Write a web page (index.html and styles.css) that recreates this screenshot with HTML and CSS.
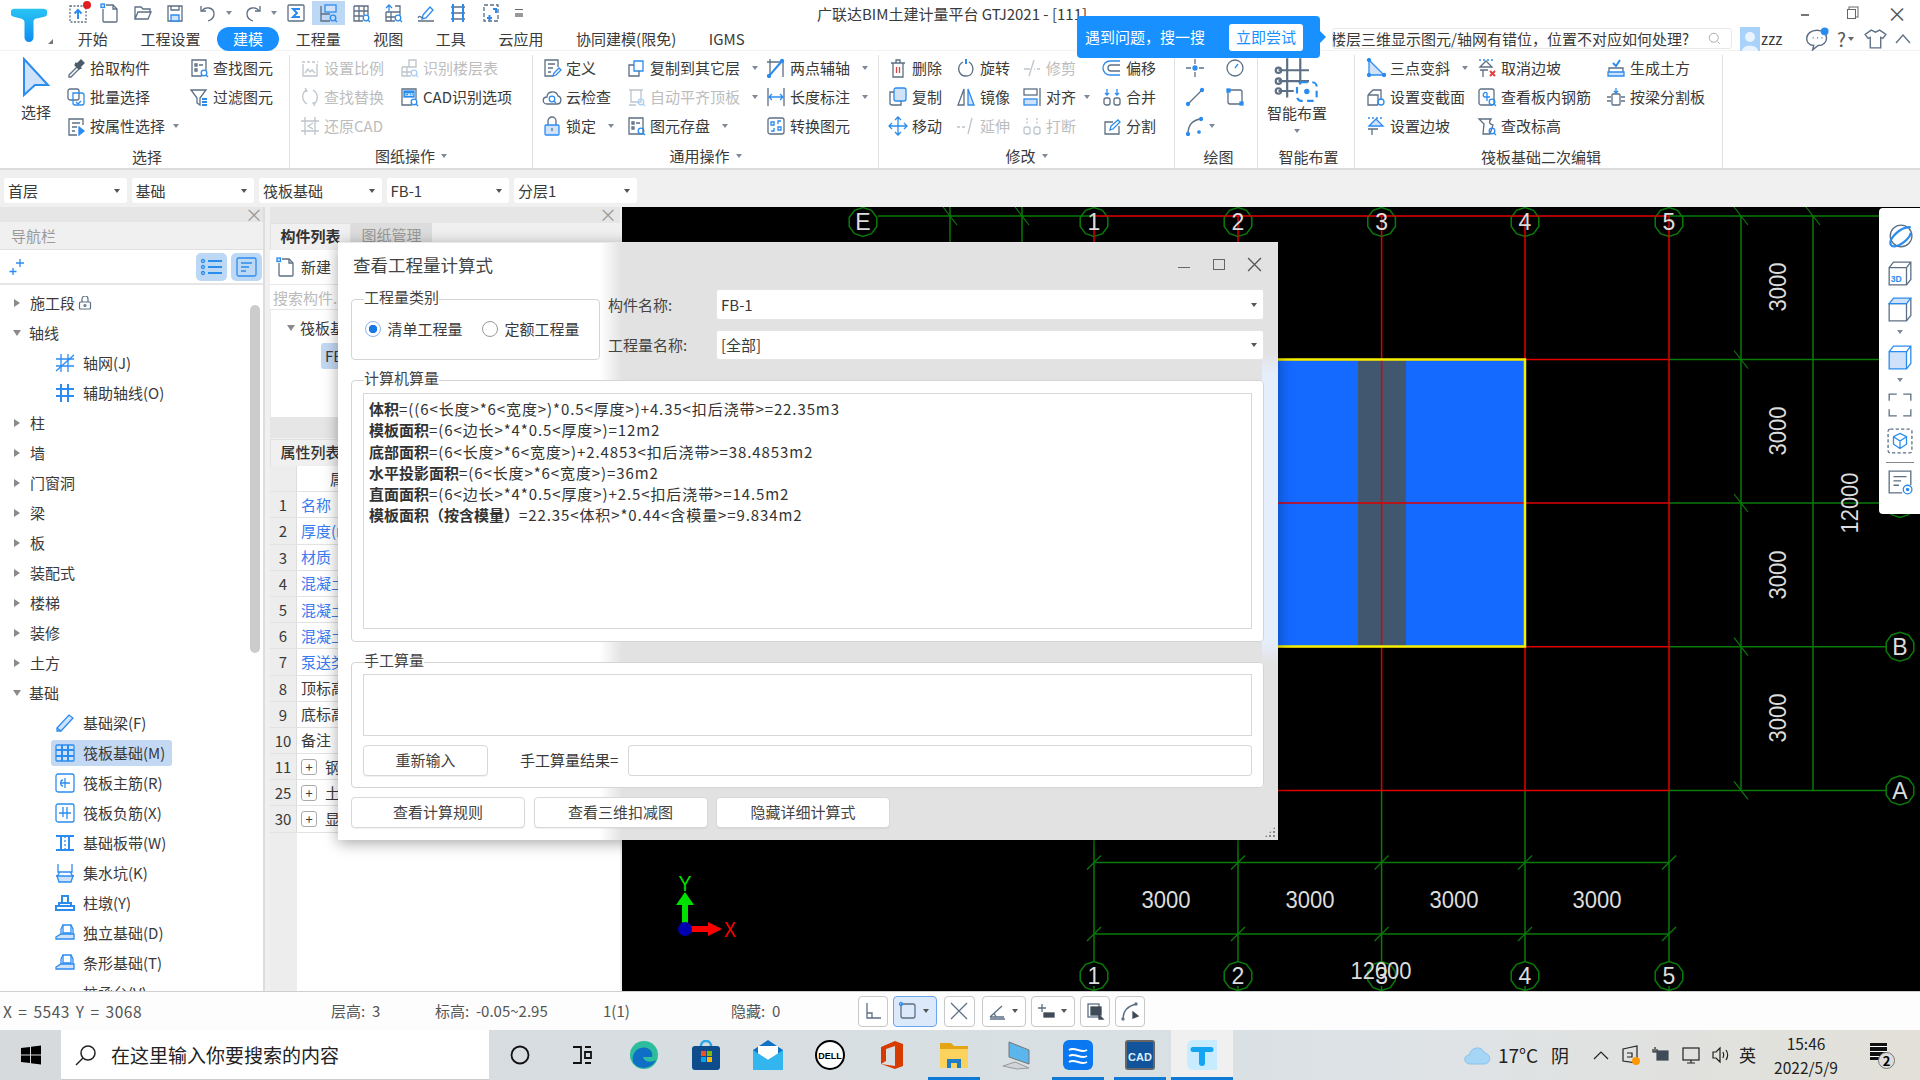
FILE: index.html
```html
<!DOCTYPE html>
<html lang="zh-CN">
<head>
<meta charset="utf-8">
<title>广联达BIM土建计量平台 GTJ2021</title>
<link rel="stylesheet" href="styles.css">
</head>
<body>
<svg class="defs" aria-hidden="true">
<defs>
<linearGradient id="tgrad" x1="0" y1="0" x2="0" y2="1"><stop offset="0" stop-color="#28c4f4"/><stop offset="1" stop-color="#0f8cf0"/></linearGradient>
<g id="mag"><circle class="a" cx="15" cy="15" r="2.8"/><path class="a" d="M17 17l2 2"/></g>
<symbol id="sync" viewBox="0 0 20 20"><path stroke-dasharray="2 1.5" d="M2 3h16v16H2z"/><path class="a w2" d="M10 16V8M6.5 10.5L10 7l3.500 3.500"/></symbol>
<symbol id="file" viewBox="0 0 20 20"><path d="M6 2h7l4 4v12a1 1 0 0 1-1 1H4a1 1 0 0 1-1-1V6"/><path d="M13 2v4h4"/><rect class="l" x="1" y="1" width="3.500" height="3.500"/></symbol>
<symbol id="folder" viewBox="0 0 20 20"><path d="M2 16V4h6l2 2h7v3M2 16l3-7h13l-3 7z"/></symbol>
<symbol id="save" viewBox="0 0 20 20"><path d="M3 3h14v15H3z"/><path d="M6 3v4h8V3"/><path class="l" d="M6 12h8v6H6z"/></symbol>
<symbol id="undo" viewBox="0 0 20 20"><path d="M4 8c3-5 12-4 12 3 0 4-3 6-6 7"/><path d="M3 3v5h5"/></symbol>
<symbol id="redo" viewBox="0 0 20 20"><path d="M16 8C13 3 4 4 4 11c0 4 3 6 6 7"/><path d="M17 3v5h-5"/></symbol>
<symbol id="sigma" viewBox="0 0 20 20"><rect x="2" y="2" width="16" height="16" rx="1"/><path class="a w2" d="M14 6H7l4 4-4 4h7"/></symbol>
<symbol id="gq" viewBox="0 0 20 20"><path d="M3 3v15h9M3 11h9"/><rect class="l" x="7" y="2" width="11" height="7"/><use href="#mag"/></symbol>
<symbol id="gq2" viewBox="0 0 20 20"><path d="M3 3h14v9M3 3v15h9M3 8h14M3 13h9M8 3v15M13 3v9"/><use href="#mag"/></symbol>
<symbol id="gq3" viewBox="0 0 20 20"><path d="M12 3h5v9M3 9h14M3 9v9h9M8 9v9M3 14h9"/><path class="a" d="M6 2v6M3 5l3-3 3 3"/><use href="#mag"/></symbol>
<symbol id="pen" viewBox="0 0 20 20"><path class="a" d="M7 12l7-8 3 3-7 8-4 1z"/><path d="M2 15c2-4 3 1 5-1M2 18h16"/></symbol>
<symbol id="bars" viewBox="0 0 20 20"><path d="M3 4h14M3 10h14M3 16h14"/><path class="a w2" d="M5 1v18M15 1v18"/></symbol>
<symbol id="plusf" viewBox="0 0 20 20"><path stroke-dasharray="4 2" d="M3 2h14v16H3z"/><path class="a w2" d="M6 15h5M8.500 12v6M12 6h3v4"/></symbol>
<symbol id="pick" viewBox="0 0 20 20"><path d="M3 17l9-9 2 2-9 9H3z"/><path class="k" d="M11 6l4-4 3 3-4 4 1 1-2 1-4-4 1-2z"/></symbol>
<symbol id="batch" viewBox="0 0 20 20"><rect x="2" y="2" width="11" height="11" rx="2"/><path class="a" d="M7 6h9a2 2 0 0 1 2 2v8a2 2 0 0 1-2 2H9a2 2 0 0 1-2-2z"/><path class="a" d="M10 15l2 2 3-3"/></symbol>
<symbol id="attr" viewBox="0 0 20 20"><path d="M17 9V3H3v16h8"/><path d="M6 7h8M6 11h5M6 15h3"/><path class="af" d="M13 11l5 4-5 4z"/></symbol>
<symbol id="find" viewBox="0 0 20 20"><path d="M13 18H3V2h14v10"/><path d="M6 6h2v2H6zM10 7h4M6 11h2v2H6z"/><use href="#mag"/></symbol>
<symbol id="filter" viewBox="0 0 20 20"><path d="M2 3h15l-6 8v7l-3-2v-5z"/><path class="a w2" d="M13 12h5M13 15h5M13 18h5"/></symbol>
<symbol id="scale" viewBox="0 0 20 20"><path stroke-dasharray="3 2" d="M2 4h16"/><path d="M3 6v12h14V6M5 15l3-4 2 3 2-2 3 3"/></symbol>
<symbol id="floors" viewBox="0 0 20 20"><path d="M10 2h7v7h-7zM3 9h14M3 9v9h9M8 9v9M3 14h9M10 2v7"/><use href="#mag"/></symbol>
<symbol id="replace" viewBox="0 0 20 20"><path d="M6 3C1 7 2 14 7 17M14 17c5-4 4-11-1-14M5 1l2 3-3 1M15 19l-2-3 3-1"/></symbol>
<symbol id="cadopt" viewBox="0 0 20 20"><path d="M13 18H3V2h14v10"/><rect class="af" x="5" y="4" width="10" height="6"/><text class="tiny" x="10" y="9" text-anchor="middle">CAD</text><use href="#mag"/></symbol>
<symbol id="restore" viewBox="0 0 20 20"><path d="M5 1v18M15 1v18M1 5h18M1 15h18M13 7l-5 3 5 3"/></symbol>
<symbol id="define" viewBox="0 0 20 20"><path d="M16 9V2H3v16h8"/><path d="M6 6h7M6 10h5M6 14h3"/><path class="a" d="M11 18l1-3 5-5 2 2-5 5z"/></symbol>
<symbol id="cloud" viewBox="0 0 20 20"><path d="M5 17c-5 0-5-7 0-7 0-6 9-7 11-1 4 1 4 8-1 8z"/><use href="#mag" transform="translate(-5 -3)"/></symbol>
<symbol id="lock" viewBox="0 0 20 20"><path d="M6 9V5a4 4 0 0 1 8 0v4"/><rect class="l" x="3" y="9" width="14" height="10" rx="1"/><path d="M10 12v3"/></symbol>
<symbol id="copyl" viewBox="0 0 20 20"><path class="a" d="M8 3h9v10H8z"/><path d="M8 7H3v11h10v-5"/></symbol>
<symbol id="auto" viewBox="0 0 20 20"><path d="M3 3h14M5 3v12h10V3M3 18h7"/><use href="#mag"/></symbol>
<symbol id="store" viewBox="0 0 20 20"><path d="M3 2h14v16H3zM6 6h2v2H6zM10 7h4M6 11h2v2H6z"/><use href="#mag"/></symbol>
<symbol id="twop" viewBox="0 0 20 20"><path d="M4 1v18M1 4h16v15"/><path class="a w2" d="M3 18L16 3"/><circle class="af" cx="3" cy="18" r="1.500"/><circle class="af" cx="16" cy="3" r="1.500"/></symbol>
<symbol id="dim" viewBox="0 0 20 20"><path d="M2 1v18M18 1v18"/><path class="a" d="M3 10h14M6 7l-3 3 3 3M14 7l3 3-3 3"/></symbol>
<symbol id="conv" viewBox="0 0 20 20"><rect x="2" y="2" width="16" height="16" rx="2"/><path class="a" d="M5 6h3v3H5zM12 11h3v3h-3zM12 8V5h3M8 12v3H5"/></symbol>
<symbol id="del" viewBox="0 0 20 20"><path d="M3 5h14M8 5V2h4v3M5 5v14h10V5"/><path class="r" d="M8.500 9v6M11.500 9v6"/></symbol>
<symbol id="rot" viewBox="0 0 20 20"><path d="M7 4C0 8 2 18 10 18s9-10 3-14"/><path class="a w2" d="M10 1v5"/></symbol>
<symbol id="trim" viewBox="0 0 20 20"><path d="M2 11h6M12 2L7 18M12 11h1M15 11h3"/></symbol>
<symbol id="offset" viewBox="0 0 20 20"><path class="a" d="M18 3H8a7 7 0 0 0 0 14h10"/><path d="M18 7H9a3 3 0 0 0 0 6h9"/></symbol>
<symbol id="copy" viewBox="0 0 20 20"><rect class="l" x="6" y="1" width="12" height="13" rx="2"/><path d="M6 5H2v11a2 2 0 0 0 2 2h9v-4"/></symbol>
<symbol id="mirror" viewBox="0 0 20 20"><path d="M8 2L2 18h6z"/><path class="l" d="M12 2l6 16h-6z"/></symbol>
<symbol id="align" viewBox="0 0 20 20"><path d="M18 1v18"/><rect x="2" y="2" width="13" height="6"/><rect class="l" x="2" y="12" width="13" height="6"/></symbol>
<symbol id="merge" viewBox="0 0 20 20"><rect x="2" y="11" width="6" height="7" rx="2"/><rect x="12" y="11" width="6" height="7" rx="2"/><path class="a" d="M5 2v6M3 6l2 2 2-2M15 2v6M13 6l2 2 2-2"/></symbol>
<symbol id="move" viewBox="0 0 20 20"><path class="a" d="M10 1v18M1 10h18M7 4l3-3 3 3M7 16l3 3 3-3M4 7l-3 3 3 3M16 7l3 3-3 3"/></symbol>
<symbol id="ext" viewBox="0 0 20 20"><path stroke-dasharray="3 2" d="M1 11h10"/><path d="M16 2l-4 16"/></symbol>
<symbol id="brk" viewBox="0 0 20 20"><rect x="2" y="11" width="6" height="7" rx="2"/><rect x="12" y="11" width="6" height="7" rx="2"/><path stroke-dasharray="2 1.500" d="M5 2v7M15 2v7"/></symbol>
<symbol id="split" viewBox="0 0 20 20"><path d="M17 10v8H3V6h8"/><path class="a" d="M8 14l1-4 7-6 2 2-7 7z"/></symbol>
<symbol id="pt" viewBox="0 0 20 20"><path d="M1 10h5M14 10h5M10 1v5M10 14v5"/><circle class="af" cx="10" cy="10" r="2"/></symbol>
<symbol id="clock" viewBox="0 0 20 20"><circle cx="10" cy="10" r="8"/><path class="a" d="M10 10l3-4"/></symbol>
<symbol id="line" viewBox="0 0 20 20"><path d="M3 17L17 3"/><circle class="af" cx="3" cy="17" r="1.500"/><circle class="af" cx="17" cy="3" r="1.500"/></symbol>
<symbol id="rect" viewBox="0 0 20 20"><rect x="3" y="3" width="14" height="14" rx="2"/><rect class="af" x="2" y="2" width="3" height="3"/><rect class="af" x="15" y="15" width="3" height="3"/></symbol>
<symbol id="arc" viewBox="0 0 20 20"><path d="M3 18C3 9 8 4 16 3"/><circle class="af" cx="3" cy="18" r="1.500"/><circle class="af" cx="16" cy="3" r="1.500"/><circle class="af" cx="14" cy="16" r="1.200"/></symbol>
<symbol id="three" viewBox="0 0 20 20"><path class="l" d="M3 2l15 15H3z"/><circle class="af" cx="3" cy="2" r="1.500"/><circle class="af" cx="3" cy="17" r="1.500"/><circle class="af" cx="18" cy="17" r="1.500"/></symbol>
<symbol id="sect" viewBox="0 0 20 20"><path d="M2 8l5-5h8v10M2 8v10h10M2 8h10v10"/><circle class="a" cx="15" cy="15" r="3"/></symbol>
<symbol id="slope" viewBox="0 0 20 20"><path class="l" d="M3 10l7-7 7 7z"/><path class="a" stroke-dasharray="2 2" d="M2 2h16"/><path d="M2 13h10M6 13v6"/></symbol>
<symbol id="cancel" viewBox="0 0 20 20"><path d="M3 9l6-6 6 6zM3 12h8M6 12v7"/><path class="a" stroke-dasharray="2 2" d="M2 2h16"/><path class="r w2" d="M13 13l5 5M18 13l-5 5"/></symbol>
<symbol id="rebar" viewBox="0 0 20 20"><rect x="2" y="2" width="15" height="16" rx="2"/><path class="a" d="M7 10h6M7 10c-2-3 1-6 3-4v8"/><use href="#mag"/></symbol>
<symbol id="elev" viewBox="0 0 20 20"><path d="M2 3h12c-3 4-1 5 2 6l-3 9H6L7 8z"/><use href="#mag"/></symbol>
<symbol id="earth" viewBox="0 0 20 20"><path d="M3 10h14v7H3z"/><path class="l" d="M2 14h16v4H2z"/><path class="a w2" d="M7 5l3 3 4-6"/></symbol>
<symbol id="cutb" viewBox="0 0 20 20"><rect x="6" y="7" width="8" height="11" rx="1"/><path d="M1 10h4M1 14h4M15 10h4M15 14h4"/><path class="a" d="M10 1v5M8 4l2 2 2-2"/></symbol>
<symbol id="spark" viewBox="0 0 20 20"><path class="a" d="M13 2v8M9 6h8M6 11v7M2.500 14.500h7"/></symbol>
<symbol id="listi" viewBox="0 0 24 20"><circle class="a" cx="3" cy="4" r="1.500"/><circle class="a" cx="3" cy="10" r="1.500"/><circle class="a" cx="3" cy="16" r="1.500"/><path class="a w2" d="M8 4h14M8 10h14M8 16h14"/></symbol>
<symbol id="formi" viewBox="0 0 24 20"><rect class="a" x="2" y="1" width="19" height="18" rx="1.500"/><path class="a" d="M6 6h11M6 10h8M6 14h5"/></symbol>
<symbol id="locks" viewBox="0 0 14 14"><path d="M4 6V3a3 3 0 0 1 6 0v3"/><rect x="1.500" y="6" width="11" height="7" rx="1"/><circle cx="7" cy="9.500" r="1"/></symbol>
<symbol id="axis" viewBox="0 0 20 20"><path class="a" d="M1 6h18M1 13h18M6 1v18M13 1v18"/><path class="a" d="M1 18L19 2"/></symbol>
<symbol id="aux" viewBox="0 0 20 20"><path class="a w2" d="M1 6h18M1 13h18M6 1v18M13 1v18"/></symbol>
<symbol id="beam" viewBox="0 0 20 20"><path class="l" d="M2 15L14 2l4 3L6 18H2z"/><path class="a" d="M2 15l4 3"/></symbol>
<symbol id="raft" viewBox="0 0 20 20"><rect class="l" x="1" y="2" width="18" height="16" rx="1"/><path class="a w2" d="M1 7h18M1 13h18M7 2v16M13 2v16"/></symbol>
<symbol id="mainr" viewBox="0 0 20 20"><rect class="a" x="1" y="1" width="18" height="18" rx="2"/><path class="a" d="M5 10h10M10 5v10M8 7c-3 0-3 6 0 6"/></symbol>
<symbol id="negr" viewBox="0 0 20 20"><rect class="a" x="1" y="1" width="18" height="18" rx="2"/><path class="a" d="M4 10h12M8 4v10M12 4v12"/></symbol>
<symbol id="band" viewBox="0 0 20 20"><path class="a w2" d="M1 3h18M1 17h18M6 3v14M14 3v14"/><path class="a" stroke-dasharray="2 2" d="M10 3v14"/></symbol>
<symbol id="pit" viewBox="0 0 20 20"><path class="a" d="M3 1v8h14V1M1 13c4 0 2-4 4-4M19 13c-4 0-2-4-4-4"/><path class="l" d="M2 13h16l-2 6H4z"/></symbol>
<symbol id="pier" viewBox="0 0 20 20"><path class="a w2" d="M7 3h6v7H7zM4 10h12v3H4zM1 13h18v4H1z"/></symbol>
<symbol id="ind" viewBox="0 0 20 20"><path class="a" d="M8 2h8v8H8z"/><path class="a" d="M6 6l2-4M16 2l2 4v6H6V6"/><path class="l" d="M1 14l5-3h13v5H1z"/></symbol>
<symbol id="pile" viewBox="0 0 20 20"><path class="a" d="M1 18L10 9l9 9"/></symbol>
<symbol id="chat" viewBox="0 0 22 22"><path d="M11 3c-12 0-12 14-3 14l-1 4 5-4c10 0 11-14-1-14z"/><circle class="af" cx="18" cy="4" r="3"/><path d="M7 10h1M11 10h1M15 10h1"/></symbol>
<symbol id="shirt" viewBox="0 0 22 22"><path d="M7 3l4 2 4-2 6 4-3 4-2-1v10H6V10l-2 1-3-4z"/></symbol>
<symbol id="user" viewBox="0 0 20 24"><rect class="uf" width="20" height="24"/><circle class="uw" cx="10" cy="10" r="5"/><path class="uw" d="M2 24c0-7 16-7 16 0z"/></symbol>
<symbol id="orbit" viewBox="0 0 24 24"><circle cx="13" cy="11" r="10"/><path class="a w2" d="M4 20C0 14 13 2 22 3M4 20c7 3 17-7 18-12"/></symbol>
<symbol id="cube3d" viewBox="0 0 24 24"><path d="M2 7h16v16H2zM2 7l4-5h16v16l-4 5M18 7l4-5"/><text class="t3d" x="3.500" y="20">3D</text></symbol>
<symbol id="cubet" viewBox="0 0 24 24"><path d="M2 7h16v16H2zM18 23l4-5V2"/><path class="l" d="M2 7l4-5h16l-4 5z"/></symbol>
<symbol id="cubef" viewBox="0 0 24 24"><path class="l" d="M2 7h16v16H2z"/><path class="a" d="M2 7l4-5h16v16l-4 5M18 7l4-5"/></symbol>
<symbol id="full" viewBox="0 0 24 24"><path d="M2 8V2h7M15 2h7v6M22 16v6h-7M9 22H2v-6"/></symbol>
<symbol id="boxc" viewBox="0 0 24 24"><rect stroke-dasharray="3 2" x="1" y="1" width="22" height="22" rx="2"/><path class="a" d="M12 5l6 3v7l-6 4-6-4V8zM6 8l6 4 6-4M12 12v7"/></symbol>
<symbol id="propv" viewBox="0 0 24 24"><path d="M14 22H2V2h20v13"/><path d="M6 7h12M6 11h7M6 15h5"/><circle class="a" cx="19" cy="19" r="4"/><circle class="af" cx="19" cy="19" r="1"/></symbol>
</defs>
</svg>

<header class="top">
  <div class="logo">
    <svg class="logo-t" viewBox="0 0 40 40"><path class="logo-p" d="M4 2h32a4 4 0 0 1 0 9l-9 2c-2 1-2 2-2 4v17a5 5 0 0 1-10 0V17c0-2-1-3-3-4l-8-2a4 4 0 0 1 0-9z"/></svg>
    <span class="logo-tri"></span>
  </div>
  <div class="top-main">
    <div class="row-q">
      <div class="qat">
        <span class="q"><svg class="i"><use href="#sync"/></svg><i class="dot"></i></span>
        <span class="q"><svg class="i"><use href="#file"/></svg></span>
        <span class="q"><svg class="i"><use href="#folder"/></svg></span>
        <span class="q"><svg class="i"><use href="#save"/></svg></span>
        <span class="q q-undo"><svg class="i"><use href="#undo"/></svg><i class="caret"></i></span>
        <span class="q q-redo"><svg class="i"><use href="#redo"/></svg><i class="caret"></i></span>
        <span class="q"><svg class="i"><use href="#sigma"/></svg></span>
        <span class="q q-on"><svg class="i"><use href="#gq"/></svg></span>
        <span class="q"><svg class="i"><use href="#gq2"/></svg></span>
        <span class="q"><svg class="i"><use href="#gq3"/></svg></span>
        <span class="q"><svg class="i"><use href="#pen"/></svg></span>
        <span class="q"><svg class="i"><use href="#bars"/></svg></span>
        <span class="q"><svg class="i"><use href="#plusf"/></svg></span>
        <span class="q q-menu"><i class="menu-c"></i></span>
      </div>
      <div class="title">广联达BIM土建计量平台 GTJ2021 - [111]</div>
      <div class="winctl">
        <span class="wc"><i class="wc-min"></i></span>
        <span class="wc"><i class="wc-max"></i></span>
        <span class="wc wc-x">×</span>
      </div>
    </div>
    <div class="row-t">
      <nav class="tabs">
        <span class="tab">开始</span><span class="tab">工程设置</span><span class="tab tab-on">建模</span><span class="tab">工程量</span><span class="tab">视图</span><span class="tab">工具</span><span class="tab">云应用</span><span class="tab">协同建模(限免)</span><span class="tab">IGMS</span>
      </nav>
      <div class="t-right">
        <div class="search"><span class="search-t"><span>楼层三维显示图元/轴网有错位，位置不对应如何处理?</span></span><svg class="i s-mag" viewBox="0 0 20 20"><circle cx="9" cy="9" r="6"/><path d="M14 14l3 3"/></svg></div>
        <svg class="avatar"><use href="#user"/></svg><span class="uname">zzz</span>
        <svg class="i i-chat"><use href="#chat"/></svg>
        <span class="help">?<i class="caret caret-s"></i></span>
        <svg class="i i-shirt"><use href="#shirt"/></svg>
        <svg class="i i-up" viewBox="0 0 20 20"><path d="M3 14l7-8 7 8"/></svg>
      </div>
    </div>
  </div>
  <div class="tip">
    <span>遇到问题，搜一搜</span><span class="tip-btn">立即尝试</span>
  </div>
</header>

<section class="ribbon">
  <div class="grp g1">
    <div class="grp-body">
      <div class="bigsel"><svg class="i-big" viewBox="0 0 30 40"><path class="l w2" d="M3 2l24 26H14L3 38z"/></svg><span>选择</span></div>
      <div class="it"><svg class="i"><use href="#pick"/></svg>拾取构件</div>
      <div class="it"><svg class="i"><use href="#find"/></svg>查找图元</div>
      <div class="it r2c2"><svg class="i"><use href="#batch"/></svg>批量选择</div>
      <div class="it"><svg class="i"><use href="#filter"/></svg>过滤图元</div>
      <div class="it r3c2"><svg class="i"><use href="#attr"/></svg>按属性选择<i class="caret"></i></div>
    </div>
    <div class="grp-label">选择</div>
  </div>
  <div class="grp g2">
    <div class="grp-body">
      <div class="it dis"><svg class="i"><use href="#scale"/></svg>设置比例</div>
      <div class="it dis"><svg class="i"><use href="#floors"/></svg>识别楼层表</div>
      <div class="it dis"><svg class="i"><use href="#replace"/></svg>查找替换</div>
      <div class="it"><svg class="i"><use href="#cadopt"/></svg>CAD识别选项</div>
      <div class="it dis"><svg class="i"><use href="#restore"/></svg>还原CAD</div>
    </div>
    <div class="grp-label up">图纸操作<i class="caret"></i></div>
  </div>
  <div class="grp g3">
    <div class="grp-body">
      <div class="it"><svg class="i"><use href="#define"/></svg>定义</div>
      <div class="it"><svg class="i"><use href="#copyl"/></svg>复制到其它层<i class="caret"></i></div>
      <div class="it"><svg class="i"><use href="#twop"/></svg>两点辅轴<i class="caret"></i></div>
      <div class="it"><svg class="i"><use href="#cloud"/></svg>云检查</div>
      <div class="it dis"><svg class="i"><use href="#auto"/></svg>自动平齐顶板<i class="caret"></i></div>
      <div class="it"><svg class="i"><use href="#dim"/></svg>长度标注<i class="caret"></i></div>
      <div class="it"><svg class="i"><use href="#lock"/></svg>锁定<i class="caret"></i></div>
      <div class="it"><svg class="i"><use href="#store"/></svg>图元存盘<i class="caret"></i></div>
      <div class="it"><svg class="i"><use href="#conv"/></svg>转换图元</div>
    </div>
    <div class="grp-label up">通用操作<i class="caret"></i></div>
  </div>
  <div class="grp g4">
    <div class="grp-body">
      <div class="it"><svg class="i"><use href="#del"/></svg>删除</div>
      <div class="it"><svg class="i"><use href="#rot"/></svg>旋转</div>
      <div class="it dis"><svg class="i"><use href="#trim"/></svg>修剪</div>
      <div class="it"><svg class="i"><use href="#offset"/></svg>偏移</div>
      <div class="it"><svg class="i"><use href="#copy"/></svg>复制</div>
      <div class="it"><svg class="i"><use href="#mirror"/></svg>镜像</div>
      <div class="it"><svg class="i"><use href="#align"/></svg>对齐<i class="caret"></i></div>
      <div class="it"><svg class="i"><use href="#merge"/></svg>合并</div>
      <div class="it"><svg class="i"><use href="#move"/></svg>移动</div>
      <div class="it dis"><svg class="i"><use href="#ext"/></svg>延伸</div>
      <div class="it dis"><svg class="i"><use href="#brk"/></svg>打断</div>
      <div class="it"><svg class="i"><use href="#split"/></svg>分割</div>
    </div>
    <div class="grp-label up">修改<i class="caret"></i></div>
  </div>
  <div class="grp g5">
    <div class="grp-body">
      <div class="it"><svg class="i"><use href="#pt"/></svg></div>
      <div class="it"><svg class="i"><use href="#clock"/></svg></div>
      <div class="it"><svg class="i"><use href="#line"/></svg></div>
      <div class="it"><svg class="i"><use href="#rect"/></svg></div>
      <div class="it"><svg class="i"><use href="#arc"/></svg><i class="caret caret-n"></i></div>
    </div>
    <div class="grp-label">绘图</div>
  </div>
  <div class="grp g6">
    <div class="smart">
      <svg class="i-smart" viewBox="0 0 42 44"><path d="M4 14h28M4 24h28M4 33h14M12 3v36M24 3v24"/><circle cx="4" cy="14" r="2.500"/><circle cx="4" cy="24" r="2.500"/><circle cx="4" cy="33" r="2.500"/><rect class="a w2" stroke-dasharray="6 4" x="21" y="25" width="18" height="17" rx="4"/><circle class="af" cx="30" cy="33.500" r="1.500"/></svg>
      <span>智能布置</span>
      <i class="caret caret-n"></i>
    </div>
    <div class="grp-label">智能布置</div>
  </div>
  <div class="grp g7">
    <div class="grp-body">
      <div class="it"><svg class="i"><use href="#three"/></svg>三点变斜<i class="caret"></i></div>
      <div class="it"><svg class="i"><use href="#cancel"/></svg>取消边坡</div>
      <div class="it"><svg class="i"><use href="#earth"/></svg>生成土方</div>
      <div class="it"><svg class="i"><use href="#sect"/></svg>设置变截面</div>
      <div class="it"><svg class="i"><use href="#rebar"/></svg>查看板内钢筋</div>
      <div class="it"><svg class="i"><use href="#cutb"/></svg>按梁分割板</div>
      <div class="it"><svg class="i"><use href="#slope"/></svg>设置边坡</div>
      <div class="it"><svg class="i"><use href="#elev"/></svg>查改标高</div>
    </div>
    <div class="grp-label">筏板基础二次编辑</div>
  </div>
</section>

<section class="combos">
  <div class="combo">首层<i class="caret caret-d"></i></div>
  <div class="combo">基础<i class="caret caret-d"></i></div>
  <div class="combo">筏板基础<i class="caret caret-d"></i></div>
  <div class="combo">FB-1<i class="caret caret-d"></i></div>
  <div class="combo">分层1<i class="caret caret-d"></i></div>
</section>

<main class="main">
  <aside class="nav">
    <div class="strip">×</div>
    <div class="nav-h">导航栏</div>
    <div class="nav-tools">
      <svg class="i"><use href="#spark"/></svg>
      <span class="ntb ntb-1"><svg class="i"><use href="#listi"/></svg></span>
      <span class="ntb"><svg class="i"><use href="#formi"/></svg></span>
    </div>
    <div class="tree">
      <div class="tr"><i class="tw"></i>施工段<svg class="i-lock"><use href="#locks"/></svg></div>
      <div class="tr"><i class="tw tw-o"></i>轴线</div>
      <div class="tr"><div class="ch"><svg class="i"><use href="#axis"/></svg>轴网(J)</div></div>
      <div class="tr"><div class="ch"><svg class="i"><use href="#aux"/></svg>辅助轴线(O)</div></div>
      <div class="tr"><i class="tw"></i>柱</div>
      <div class="tr"><i class="tw"></i>墙</div>
      <div class="tr"><i class="tw"></i>门窗洞</div>
      <div class="tr"><i class="tw"></i>梁</div>
      <div class="tr"><i class="tw"></i>板</div>
      <div class="tr"><i class="tw"></i>装配式</div>
      <div class="tr"><i class="tw"></i>楼梯</div>
      <div class="tr"><i class="tw"></i>装修</div>
      <div class="tr"><i class="tw"></i>土方</div>
      <div class="tr"><i class="tw tw-o"></i>基础</div>
      <div class="tr"><div class="ch"><svg class="i"><use href="#beam"/></svg>基础梁(F)</div></div>
      <div class="tr"><div class="ch ch-on"><svg class="i"><use href="#raft"/></svg>筏板基础(M)</div></div>
      <div class="tr"><div class="ch"><svg class="i"><use href="#mainr"/></svg>筏板主筋(R)</div></div>
      <div class="tr"><div class="ch"><svg class="i"><use href="#negr"/></svg>筏板负筋(X)</div></div>
      <div class="tr"><div class="ch"><svg class="i"><use href="#band"/></svg>基础板带(W)</div></div>
      <div class="tr"><div class="ch"><svg class="i"><use href="#pit"/></svg>集水坑(K)</div></div>
      <div class="tr"><div class="ch"><svg class="i"><use href="#pier"/></svg>柱墩(Y)</div></div>
      <div class="tr"><div class="ch"><svg class="i"><use href="#ind"/></svg>独立基础(D)</div></div>
      <div class="tr"><div class="ch"><svg class="i"><use href="#ind"/></svg>条形基础(T)</div></div>
      <div class="tr"><div class="ch"><svg class="i"><use href="#pile"/></svg>桩承台(V)</div></div>
      <span class="sbar"></span>
    </div>
  </aside>

  <aside class="side">
    <div class="strip">×</div>
    <div class="ptabs"><span class="ptab ptab-on">构件列表</span><span class="ptab">图纸管理</span></div>
    <div class="newrow"><svg class="i"><use href="#file"/></svg>新建</div>
    <div class="srow">搜索构件...</div>
    <div class="ctree">
      <div class="ct-h"><i class="tw tw-o"></i>筏板基础</div>
      <div class="ct-i">FB-1</div>
    </div>
    <div class="pgap"></div>
    <div class="ptabs ptabs-2"><span class="ptab ptab-on">属性列表</span></div>
    <div class="ptable">
      <div class="pr pr-h"><b></b><span class="ph">属性名称</span></div>
      <div class="pr"><b>1</b><span class="lk">名称</span></div>
      <div class="pr"><b>2</b><span class="lk">厚度(mm)</span></div>
      <div class="pr"><b>3</b><span class="lk">材质</span></div>
      <div class="pr"><b>4</b><span class="lk">混凝土类型</span></div>
      <div class="pr"><b>5</b><span class="lk">混凝土强度</span></div>
      <div class="pr"><b>6</b><span class="lk">混凝土外加</span></div>
      <div class="pr"><b>7</b><span class="lk">泵送类型</span></div>
      <div class="pr"><b>8</b><span>顶标高(m)</span></div>
      <div class="pr"><b>9</b><span>底标高(m)</span></div>
      <div class="pr"><b>10</b><span>备注</span></div>
      <div class="pr"><b>11</b><i class="plus">+</i><span>钢筋业务属性</span></div>
      <div class="pr"><b>25</b><i class="plus">+</i><span>土建业务属性</span></div>
      <div class="pr"><b>30</b><i class="plus">+</i><span>显示样式</span></div>
    </div>
  </aside>

  <div class="cad">
    <svg class="cad-svg" viewBox="622 207 1298 784">
      <defs>
        <polygon id="dec" points="13.800,4.500 8.500,11.700 0,14.500 -8.500,11.700 -13.800,4.500 -13.800,-4.500 -8.500,-11.700 0,-14.500 8.500,-11.700 13.800,-4.500"/>
        <path id="tk1" d="M-7 -9L7 9"/>
        <path id="tk2" d="M-7 7L7 -7"/>
      </defs>
      <rect x="1100" y="359.500" width="425" height="287" class="c-blue"/>
      <rect x="1358" y="359.500" width="48" height="287" class="c-gray"/>
      <g class="c-g">
        <path d="M878 216H1094M1669 216H1886M1669 359.500H1886M1669 503H1886M1669 646.700H1886M1669 790.400H1886"/>
        <path d="M950 207V800M1022 207V800M1741 216V790.400M1813 216V790.400"/>
        <path d="M1094 790V961M1238 790V961M1381.600 790V961M1525 790V961M1669 790V961"/>
        <path d="M1094 862.500H1669M1094 934H1669"/>
        <g class="c-g2">
          <use href="#tk1" x="950" y="216"/><use href="#tk1" x="1022" y="216"/>
          <use href="#tk1" x="1741" y="216"/><use href="#tk1" x="1813" y="216"/>
          <use href="#tk1" x="1741" y="359.500"/><use href="#tk1" x="1741" y="503"/><use href="#tk1" x="1741" y="646.700"/><use href="#tk1" x="1741" y="790.400"/>
          <use href="#tk2" x="1094" y="862.500"/><use href="#tk2" x="1238" y="862.500"/><use href="#tk2" x="1381.600" y="862.500"/><use href="#tk2" x="1525" y="862.500"/><use href="#tk2" x="1669" y="862.500"/>
          <use href="#tk2" x="1094" y="934"/><use href="#tk2" x="1238" y="934"/><use href="#tk2" x="1381.600" y="934"/><use href="#tk2" x="1525" y="934"/><use href="#tk2" x="1669" y="934"/>
        </g>
        <use href="#dec" x="863" y="222"/>
        <use href="#dec" x="1094" y="222"/><use href="#dec" x="1238" y="222"/><use href="#dec" x="1381.600" y="222"/><use href="#dec" x="1525" y="222"/><use href="#dec" x="1669" y="222"/>
        <use href="#dec" x="1094" y="976"/><use href="#dec" x="1238" y="976"/><use href="#dec" x="1381.600" y="976"/><use href="#dec" x="1525" y="976"/><use href="#dec" x="1669" y="976"/>
        <use href="#dec" x="1900" y="503"/><use href="#dec" x="1900" y="646.700"/><use href="#dec" x="1900" y="790.400"/>
        <path d="M1094 986V991M1238 986V991M1381.600 986V991M1525 986V991M1669 986V991"/>
      </g>
      <g class="c-r">
        <path d="M1094 216H1669M1094 359.500H1669M1094 503H1669M1094 646.700H1669M1094 790.400H1669"/>
        <path d="M1094 216V790.400M1238 216V790.400M1381.600 216V790.400M1525 216V790.400M1669 216V790.400"/>
      </g>
      <rect x="1100" y="359.500" width="425" height="287" class="c-y"/>
      <g class="c-t">
        <text x="863" y="230">E</text>
        <text x="1094" y="230">1</text><text x="1238" y="230">2</text><text x="1381.600" y="230">3</text><text x="1525" y="230">4</text><text x="1669" y="230">5</text>
        <text x="1094" y="984">1</text><text x="1238" y="984">2</text><text x="1381.600" y="984">3</text><text x="1525" y="984">4</text><text x="1669" y="984">5</text>
        <text x="1900" y="655">B</text><text x="1900" y="799">A</text>
        <text x="1166" y="908" textLength="49" lengthAdjust="spacingAndGlyphs">3000</text>
        <text x="1310" y="908" textLength="49" lengthAdjust="spacingAndGlyphs">3000</text>
        <text x="1454" y="908" textLength="49" lengthAdjust="spacingAndGlyphs">3000</text>
        <text x="1597" y="908" textLength="49" lengthAdjust="spacingAndGlyphs">3000</text>
        <text x="1381" y="979" textLength="61" lengthAdjust="spacingAndGlyphs">12000</text>
        <text transform="translate(1786 287) rotate(-90)" textLength="49" lengthAdjust="spacingAndGlyphs">3000</text>
        <text transform="translate(1786 431) rotate(-90)" textLength="49" lengthAdjust="spacingAndGlyphs">3000</text>
        <text transform="translate(1786 575) rotate(-90)" textLength="49" lengthAdjust="spacingAndGlyphs">3000</text>
        <text transform="translate(1786 718) rotate(-90)" textLength="49" lengthAdjust="spacingAndGlyphs">3000</text>
        <text transform="translate(1858 503) rotate(-90)" textLength="61" lengthAdjust="spacingAndGlyphs">12000</text>
      </g>
      <path class="ax-g" d="M682 929V905H676l9-13 9 13H688V929z"/>
      <path class="ax-r" d="M685 926H708V922l14 7-14 7V932H685z"/>
      <circle class="ax-b" cx="685" cy="929" r="7"/>
      <text class="ax-ty" x="685" y="891" textLength="13" lengthAdjust="spacingAndGlyphs">Y</text>
      <text class="ax-tx" x="730" y="937" textLength="12" lengthAdjust="spacingAndGlyphs">X</text>
    </svg>
    <div class="rtools">
      <svg class="rt"><use href="#orbit"/></svg>
      <svg class="rt"><use href="#cube3d"/></svg>
      <svg class="rt"><use href="#cubet"/></svg>
      <i class="caret caret-n"></i>
      <svg class="rt"><use href="#cubef"/></svg>
      <i class="caret caret-n"></i>
      <svg class="rt"><use href="#full"/></svg>
      <svg class="rt"><use href="#boxc"/></svg>
      <span class="rt-sep"></span>
      <svg class="rt"><use href="#propv"/></svg>
    </div>
  </div>

  <div class="dlg">
    <div class="dlg-t">
      <span class="dlg-title">查看工程量计算式</span>
      <span class="dlg-ctl"><span class="dc"><i class="dc-min"></i></span><span class="dc"><i class="dc-max"></i></span><span class="dc"><svg class="dc-x" viewBox="0 0 14 14"><path d="M1 1l12 12M13 1L1 13"/></svg></span></span>
    </div>
    <div class="dlg-top">
      <fieldset class="fs fs-kind">
        <legend>工程量类别</legend>
        <div class="radios"><span class="rd"><i class="dotr dotr-on"></i>清单工程量</span><span class="rd"><i class="dotr"></i>定额工程量</span></div>
      </fieldset>
      <div class="form">
        <label>构件名称:</label><div class="inp">FB-1<i class="caret caret-s2"></i></div>
        <label>工程量名称:</label><div class="inp">[全部]<i class="caret caret-s2"></i></div>
      </div>
    </div>
    <fieldset class="fs fs-calc">
      <legend>计算机算量</legend>
      <div class="calc">
        <p><b>体积</b>=((6&lt;长度&gt;*6&lt;宽度&gt;)*0.5&lt;厚度&gt;)+4.35&lt;扣后浇带&gt;=22.35m3</p>
        <p><b>模板面积</b>=(6&lt;边长&gt;*4*0.5&lt;厚度&gt;)=12m2</p>
        <p><b>底部面积</b>=(6&lt;长度&gt;*6&lt;宽度&gt;)+2.4853&lt;扣后浇带&gt;=38.4853m2</p>
        <p><b>水平投影面积</b>=(6&lt;长度&gt;*6&lt;宽度&gt;)=36m2</p>
        <p><b>直面面积</b>=(6&lt;边长&gt;*4*0.5&lt;厚度&gt;)+2.5&lt;扣后浇带&gt;=14.5m2</p>
        <p><b>模板面积（按含模量）</b>=22.35&lt;体积&gt;*0.44&lt;含模量&gt;=9.834m2</p>
      </div>
    </fieldset>
    <fieldset class="fs fs-hand">
      <legend>手工算量</legend>
      <div class="hand"></div>
      <div class="hand-row"><span class="btn btn-re">重新输入</span><span class="hand-l">手工算量结果=</span><div class="hand-in"></div></div>
    </fieldset>
    <div class="dlg-btns"><span class="btn">查看计算规则</span><span class="btn">查看三维扣减图</span><span class="btn">隐藏详细计算式</span></div>
    <i class="grip"></i>
  </div>
</main>

<section class="status">
  <span class="st st1">X = 5543 Y = 3068</span>
  <span class="st st2">层高:&nbsp;&nbsp;3</span>
  <span class="st st3">标高:&nbsp;&nbsp;-0.05~2.95</span>
  <span class="st st4">1(1)</span>
  <span class="st st5">隐藏:&nbsp;&nbsp;0</span>
  <div class="stools">
    <span class="sb sb-s"><svg class="i" viewBox="0 0 20 20"><path d="M4 2v15h14M4 12h5v5"/></svg></span>
    <span class="sb sb-m sb-on"><svg class="i" viewBox="0 0 20 20"><rect x="3" y="3" width="14" height="14" rx="2"/><circle class="a" cx="3" cy="3" r="1.500"/></svg><i class="caret"></i></span>
    <span class="sb sb-x"><svg class="i" viewBox="0 0 20 20"><path d="M2 2l16 16M18 2L2 18"/></svg></span>
    <span class="sb sb-m"><svg class="i" viewBox="0 0 20 20"><path d="M3 16L15 5M3 16h14M7 12l2 4M3 18h15"/></svg><i class="caret"></i></span>
    <span class="sb sb-m"><svg class="i" viewBox="0 0 20 20"><path d="M2 7h8M6 3v8"/><rect class="dk" x="8" y="12" width="10" height="4"/></svg><i class="caret"></i></span>
    <span class="sb sb-s"><svg class="i" viewBox="0 0 20 20"><rect x="3" y="3" width="11" height="13"/><rect class="dk" x="6" y="6" width="10" height="8"/><path class="dk" d="M14 14l4 4h-4z"/></svg></span>
    <span class="sb sb-s"><svg class="i" viewBox="0 0 20 20"><path d="M3 18C3 10 8 5 16 3"/><circle cx="3" cy="18" r="1"/><circle cx="16" cy="3" r="1"/><path class="dk" d="M13 11l5 4-5 2z"/></svg></span>
  </div>
</section>

<footer class="taskbar">
  <div class="start"><svg class="win" viewBox="0 0 20 20"><path d="M0 3l9-1v7.500H0zM10 1.800L20 .5v9h-10zM0 10.500h9V18L0 17zM10 10.500h10v9l-10-1.300z"/></svg></div>
  <div class="tsearch"><svg class="tmag" viewBox="0 0 22 22"><circle cx="13" cy="9" r="7"/><path d="M8 14l-7 7"/></svg><span>在这里输入你要搜索的内容</span></div>
  <div class="apps">
    <span class="ap"><svg class="ic" viewBox="0 0 24 24"><circle class="t-k" cx="12" cy="12" r="8.500"/></svg></span>
    <span class="ap"><svg class="ic" viewBox="0 0 24 24"><path class="t-k" d="M3 4h8v16H3M15 4h6M15 20h6M15 9h6v6h-6z"/></svg></span>
    <span class="ap"><svg class="ic ic-l" viewBox="0 0 30 30"><circle class="e1" cx="15" cy="15" r="14"/><path class="e2" d="M4 22C2 12 10 6 18 8c5 2 6 6 5 9h-9c1 5 8 6 13 3-4 9-18 11-23 2z"/></svg></span>
    <span class="ap"><svg class="ic ic-l" viewBox="0 0 30 30"><path class="m-lk" d="M10 6a5 5 0 0 1 10 0"/><rect class="s1" x="1" y="6" width="28" height="24" rx="3"/><rect class="wr" x="10" y="11" width="5" height="5"/><rect class="wg" x="16" y="11" width="5" height="5"/><rect class="wb" x="10" y="17" width="5" height="5"/><rect class="wy" x="16" y="17" width="5" height="5"/></svg></span>
    <span class="ap"><svg class="ic ic-l" viewBox="0 0 30 30"><path class="m1" d="M0 10L15 0l15 10v20H0z"/><path class="m3" d="M5 6h20v8l-10 6-10-6z"/><path class="m2" d="M0 10l15 10 15-10v20H0z"/></svg></span>
    <span class="ap"><svg class="ic ic-l" viewBox="0 0 30 30"><circle class="d1" cx="15" cy="15" r="14"/><text class="d2" x="15" y="19" text-anchor="middle">DELL</text></svg></span>
    <span class="ap"><svg class="ic ic-l" viewBox="0 0 30 30"><path class="o1" d="M4 7L18 1l8 3v22l-8 3-14-5 14 2V6L9 9v12l-5 3z"/></svg></span>
    <span class="ap ap-u"><svg class="ic ic-l" viewBox="0 0 30 30"><path class="f1" d="M1 3h11l3 3h14v22H1z"/><path class="f2" d="M1 9h28v19H1z"/><path class="f3" d="M8 28V19h14v9h-4v-5h-6v5z"/></svg></span>
    <span class="ap"><svg class="ic ic-l" viewBox="0 0 30 30"><path class="p1" d="M8 2l20 8v14L8 17z"/><path class="p2" d="M2 26l12-4 14 6-12 1z"/></svg></span>
    <span class="ap ap-u"><svg class="ic ic-l" viewBox="0 0 30 30"><rect class="b1" width="30" height="30" rx="6"/><path class="b2" d="M6 10c6-4 12 4 18 0M6 16c6-4 12 4 18 0M6 22c6-4 12 4 18 0"/></svg></span>
    <span class="ap ap-u"><svg class="ic ic-l" viewBox="0 0 30 30"><rect class="c1" width="30" height="30" rx="3"/><rect class="c2" x="2" y="2" width="26" height="26"/><text class="c3" x="15" y="21" text-anchor="middle">CAD</text></svg></span>
    <span class="ap ap-u ap-on"><svg class="ic ic-l" viewBox="0 0 30 30"><rect class="g1" width="30" height="30" rx="6"/><path class="g2" d="M6 7h18a2 2 0 0 1 0 5h-6v11a3 3 0 0 1-6 0V12H6a2 2 0 0 1 0-5z"/></svg></span>
  </div>
  <div class="tray">
    <svg class="tc" viewBox="0 0 30 24"><path class="cl" d="M7 22c-8 0-8-10-1-10 1-9 14-11 17-2 7 0 8 12-1 12z"/></svg>
    <span class="tt t-temp">17°C</span>
    <span class="tt t-w">阴</span>
    <svg class="tr-i tr-up" viewBox="0 0 20 20"><path d="M3 14l7-7 7 7"/></svg>
    <svg class="tr-i" viewBox="0 0 20 20"><path d="M2 4l14-3v17L2 16z"/><path d="M6 8h5v4H6"/><circle class="or" cx="15" cy="16" r="4"/></svg>
    <svg class="tr-i" viewBox="0 0 20 20"><path d="M4 2v5M2 4v3h4V4"/><rect class="dk" x="6" y="6" width="11" height="9"/></svg>
    <svg class="tr-i" viewBox="0 0 20 20"><rect x="2" y="3" width="16" height="12"/><path d="M10 15v3M6 18h8"/></svg>
    <svg class="tr-i" viewBox="0 0 20 20"><path d="M2 7h3l4-4v14l-4-4H2zM12 7c1 2 1 4 0 6M15 5c2 3 2 7 0 10"/></svg>
    <span class="tt t-ime">英</span>
    <div class="clock"><span>15:46</span><span>2022/5/9</span></div>
    <div class="notif"><i class="n-ic"></i><b class="n-b">2</b></div>
  </div>
</footer>
</body>
</html>
```

FILE: styles.css
```css
*{box-sizing:border-box}
html,body{margin:0;padding:0}
body{width:1920px;height:1080px;overflow:hidden;display:flex;flex-direction:column;background:#f0f0f0;color:#3a3a3a;font:15px/20px "Noto Sans CJK SC","Liberation Sans",sans-serif;position:relative}
.defs{width:0;height:0;position:absolute}
i{font-style:normal;display:block}
.i{width:20px;height:20px;flex:none;fill:none;stroke:#5c6f84;stroke-width:1.3}
.a{stroke:#2b8cf0;fill:none}
.w2{stroke-width:2}
.l{stroke:#2b8cf0;fill:#cfe2fa}
.af{fill:#2b8cf0;stroke:#2b8cf0}
.k{fill:#4d5b6b;stroke:#4d5b6b}
.r{stroke:#e04040}
.dk{fill:#3f4b58;stroke:#3f4b58}
.tiny{font:bold 4px "Liberation Sans",sans-serif;fill:#fff;stroke:none}
.t3d{font:bold 8px "Liberation Sans",sans-serif;fill:#2b8cf0;stroke:none}
.uf{fill:#a9d2fb;stroke:none}
.uw{fill:#e9f4ff;stroke:none}
.caret{width:0;height:0;border-left:3.5px solid transparent;border-right:3.5px solid transparent;border-top:4px solid #7f8a96;margin-left:8px;flex:none}
.caret-n{margin:0}
.caret-s{margin-left:2px;border-top-color:#666}

.top{height:50px;display:flex;background:#fff;position:relative;flex:none}
.logo{width:61.5px;position:relative;flex:none}
.logo-t{width:36px;height:40px;position:absolute;left:11px;top:5px}
.logo-p{fill:url(#tgrad)}
.logo-tri{position:absolute;left:48px;top:39px;width:0;height:0;border-left:5px solid transparent;border-bottom:5px solid #777}
.top-main{flex:1;display:flex;flex-direction:column;min-width:0}
.row-q{height:27px;display:flex;align-items:center}
.qat{width:755.5px;display:flex;align-items:center;height:27px;flex:none;margin-top:-2px}
.q{width:32.5px;height:24px;display:flex;align-items:center;justify-content:center;position:relative;flex:none}
.q-undo{width:45px;justify-content:flex-start;padding-left:6.5px}
.q-redo{width:43px;justify-content:flex-start;padding-left:6.5px}
.q-on{background:#bcd8f5}
.q-menu{width:24px}
.dot{position:absolute;right:3px;top:0;width:8px;height:8px;border-radius:50%;background:#e02020}
.menu-c{width:8px;height:8px;border-top:1px solid #666;border-bottom:4px solid #999}
.title{flex:none;color:#3a3a3a;white-space:nowrap}
.winctl{margin-left:auto;display:flex;align-items:center;height:27px;padding-right:0}
.wc{width:46px;height:24px;display:flex;align-items:center;justify-content:center;color:#555}
.wc-min{width:8px;height:2px;background:#777;margin-top:3px}
.wc-max{width:9px;height:10px;border:1.5px solid #666;box-shadow:2px -2px 0 -.5px #fff,2px -2px 0 .5px #666}
.wc-x{font-size:20px}
.row-t{height:23px;display:flex;align-items:center}
.tabs{display:flex;height:24px;flex:none}
.tab{padding:0 16.3px;line-height:24px;white-space:nowrap;color:#3a3a3a}
.tab-on{background:#1890ff;color:#fff;border-radius:12px}
.t-right{margin-left:auto;display:flex;align-items:center;height:23px}
.search{width:400px;height:21px;background:#fff;border:1px solid #e8e8e8;border-radius:3px;display:flex;align-items:center;margin-right:8px;position:relative}
.search-t{width:356px;overflow:hidden;display:flex;justify-content:flex-end;white-space:nowrap;font-size:15px;line-height:19px;flex:none}
.search-t span{flex:none}
.s-mag{width:15px;height:15px;margin-left:18px;stroke:#aaa}
.avatar{width:20px;height:24px;flex:none}
.uname{width:46px;padding-left:1px;font-size:15px}
.i-chat{width:24px;height:24px;margin-left:-1px;margin-right:8px}
.help{display:flex;align-items:center;font-size:19px;width:23px;color:#555}
.i-shirt{width:23px;height:23px;margin-left:4px;margin-right:4px}
.i-up{width:20px;height:20px;margin-left:2px;margin-right:7px}
.tip{position:absolute;left:1077px;top:16px;width:243px;height:42px;background:#1890ff;border-radius:4px;color:#fff;display:flex;align-items:center;padding-left:8px;z-index:5}
.tip::after{content:"";position:absolute;right:-6px;top:15px;border-left:6px solid #1890ff;border-top:6px solid transparent;border-bottom:6px solid transparent}
.tip-btn{margin-left:24px;width:74px;height:27px;line-height:26px;text-align:center;background:#fff;color:#1890ff;border-radius:3px}

.ribbon{height:120px;flex:none;background:#fff;display:flex;padding-top:4px;border-top:1px solid #f2f2f2;border-bottom:2px solid #dcdcdc}
.grp{height:114px;border-right:1px solid #e0e0e0;display:flex;flex-direction:column;flex:none}
.grp-body{display:grid;grid-template-rows:repeat(3,28.8px);height:87px;margin-top:-1px;align-items:center}
.grp-label{height:24px;line-height:24px;text-align:center;margin-top:5px;display:flex;justify-content:center;align-items:center;white-space:nowrap;padding-left:5px}
.grp-label.up{margin-top:3px;padding-left:0}
.grp-label .caret{margin-left:6px}
.it{display:flex;align-items:center;gap:4px;white-space:nowrap;height:29px}
.dis{color:#bdbdbd}
.dis .i{opacity:.4}
.g1{width:290px}
.g1 .grp-body{grid-template-columns:66px 123px 1fr}
.bigsel{grid-row:1/4;display:flex;flex-direction:column;align-items:center;height:87px;padding-left:6px}
.i-big{width:30px;height:40px;margin-top:3px;fill:none;margin-bottom:5px}
.g1 .r2c2{grid-column:2;grid-row:2}
.g1 .r3c2{grid-column:2;grid-row:3}
.g1 .r3c2 .caret{margin-left:4px}
.g2{width:243px}
.g2 .grp-body{grid-template-columns:99px 1fr;padding-left:10px}
.g3{width:346px}
.g3 .grp-body{grid-template-columns:84px 140px 1fr;padding-left:9px}
.g4{width:296px}
.g4 .grp-body{grid-template-columns:68px 66px 80px 1fr;padding-left:9px}
.g4 .it .caret{margin-left:4px}
.g5{width:83px}
.g5 .grp-body{grid-template-columns:40px 1fr;padding-left:10px}
.g6{width:97px}
.smart{height:87px;display:flex;flex-direction:column;align-items:center;padding-right:18px}
.i-smart{width:46px;height:48px;fill:none;stroke:#5c6f84;stroke-width:2;flex:none}
.smart .caret{margin-top:6px}
.g7{width:368px}
.g7 .grp-body{grid-template-columns:111px 129px 1fr;padding-left:11px}

.combos{height:37px;flex:none;background:#f0f0f0;display:flex;gap:5px;padding:8px 0 0 4px}
.combo{width:122.5px;height:25px;background:#fff;border-radius:3px;padding-left:4px;line-height:25px;display:flex;align-items:center;justify-content:space-between;padding-right:7px}
.caret-d{border-top-color:#555}

.main{height:784px;flex:none;display:flex;position:relative;background:#f0f0f0}
.strip{height:15px;background:#e6e6e6;text-align:right;padding-right:3px;color:#999;font-size:18px;line-height:15px}
.nav .strip{padding-right:0}
.nav{width:265px;flex:none;display:flex;flex-direction:column;background:#fff;border-right:2px solid #ddd}
.nav-h{height:28px;background:#f0f0f0;color:#9a9a9a;padding-left:11px;line-height:27px;border-bottom:1px solid #e0e0e0}
.nav-tools{height:35px;display:flex;align-items:center;padding-left:7px;border-bottom:2px solid #e6e6e6;gap:0;flex:none}
.ntb{width:31px;height:28px;background:#bcd8f5;border-radius:5px;display:flex;align-items:center;justify-content:center;margin-left:4px}
.ntb-1{margin-left:auto}
.nav-tools .ntb:last-child{margin-right:1px}
.ntb .i{width:24px;height:20px}
.tree{flex:1;position:relative;overflow:hidden;padding-top:3px}
.tr{height:30px;display:flex;align-items:center;white-space:nowrap;padding-left:14px}
.tw{width:0;height:0;border-left:6px solid #8a8a8a;border-top:4.5px solid transparent;border-bottom:4.5px solid transparent;margin-right:10px;flex:none}
.tw-o{border-left:4.5px solid transparent;border-right:4.5px solid transparent;border-top:6px solid #8a8a8a;border-bottom:0;margin-left:-1px;margin-right:8px}
.i-lock{width:14px;height:14px;margin-left:3px;fill:none;stroke:#5c6f84;stroke-width:1.200}
.ch{margin-left:37px;height:26px;width:121px;display:flex;align-items:center;gap:8px;padding-left:4px;border-radius:3px}
.ch-on{background:#c3d9f3}
.sbar{position:absolute;left:250px;top:20px;width:10px;height:348px;background:#ccc;border-radius:5px}

.side{width:350px;margin-left:5px;flex:none;display:flex;flex-direction:column;background:#fff}
.ptabs{height:28px;background:#f0f0f0;display:flex;flex:none;align-items:flex-end;border-top:1px solid #e6e6e6}
.ptab{width:81px;height:27px;line-height:23px;text-align:center;background:#ddd;color:#999}
.ptab-on{background:#f0f0f0;color:#333;font-weight:700;border:1px solid #e0e0e0;border-bottom:0}
.ptabs-2 .ptab-on{font-weight:500}
.newrow{height:35px;display:flex;align-items:center;gap:5px;padding-left:6px;border-bottom:1px solid #e8e8e8;flex:none}
.srow{height:25px;color:#bbb;padding-left:3px;line-height:25px;border-bottom:1px solid #e8e8e8;flex:none}
.ctree{height:107px;flex:none;padding-top:7px;border-left:1px solid #e8e8e8}
.ct-h{display:flex;align-items:center;padding-left:17px;height:22px}
.ct-h .tw-o{margin-right:5px}
.ct-i{margin:4px 0 0 50px;height:26px;line-height:26px;background:#c3d9f3;border-radius:3px;padding-left:4px}
.pgap{height:21px;background:#e6e6e6;flex:none}
.ptabs-2{border-top:0}
.ptable{flex:1;background:linear-gradient(90deg,#ededed 27px,#fff 27px)}
.pr{height:26.2px;display:flex;align-items:center;border-bottom:1px solid #e2e2e2;white-space:nowrap}
.pr b{width:27px;flex:none;text-align:center;font-weight:400;border-right:1px solid #ddd;height:100%;line-height:25px;background:#ededed}
.pr span{padding-left:4px}
.pr .ph{padding-left:33px}
.lk{color:#3a7bf0}
.plus{width:16px;height:16px;border:1px solid #aaa;border-radius:3px;margin-left:4px;font-size:13px;line-height:13px;text-align:center;flex:none}
.plus + span{padding-left:8px}

.cad{flex:1;margin-left:2px;background:#000;position:relative;min-width:0}
.cad-svg{width:1298px;height:784px;display:block}
.c-blue{fill:#1469ff}
.c-gray{fill:#41576f}
.c-y{fill:none;stroke:#f0f000;stroke-width:2.5}
.c-g{fill:none;stroke:#0a7a0a;stroke-width:1.500}
.c-g2 use{stroke-width:1.200}
.c-r{fill:none;stroke:#e00000;stroke-width:1.500}
.c-t text{font:23px "Liberation Sans Narrow","Liberation Sans",sans-serif;fill:#ddd;text-anchor:middle}
.ax-g{fill:#00e000}
.ax-r{fill:#f00}
.ax-b{fill:#0000b0}
.ax-ty{font:22px "Liberation Sans",sans-serif;fill:#00e000;text-anchor:middle}
.ax-tx{font:22px "Liberation Sans",sans-serif;fill:#f00;text-anchor:middle}
.rtools{position:absolute;right:0;top:1px;width:41px;height:306px;background:#fff;border-radius:4px 0 0 4px;display:flex;flex-direction:column;align-items:center;padding-top:16px}
.rt{width:26px;height:26px;fill:none;stroke:#5c6f84;stroke-width:1.200;flex:none;margin-bottom:10px}
.rtools .caret{margin:-2px 0 10px}
.rt-sep{width:28px;height:1px;background:#888;margin:-2px 0 6px;flex:none}

.dlg{position:absolute;left:338px;top:35px;width:940px;height:598px;padding:0 14px 0 13px;background:linear-gradient(#e2e2e2 110px,#e6edfb 130px,#e6edfb 400px,#e2e2e2 420px) right/16px 100% no-repeat,linear-gradient(90deg,#fff 262px,#e2e2e2 284px);box-shadow:0 3px 14px rgba(0,0,0,.35);border-top:1px solid #e8e8e8;z-index:3}
.dlg-t{height:43px;display:flex;align-items:center;justify-content:space-between;margin-left:2px}
.dlg-title{font-size:17.5px;color:#444}
.dlg-ctl{display:flex;align-items:center;margin-right:-7.5px}
.dc{width:35px;height:20px;display:flex;align-items:center;justify-content:center}
.dc-min{width:12px;height:1px;background:#666;margin-top:6px}
.dc-max{width:12px;height:11px;border:1px solid #666}
.dc-x{width:15px;height:15px;fill:none;stroke:#555;stroke-width:1.200}
.dlg-top{display:flex;height:71px;margin-top:3px}
.fs{margin:0;padding:0 11px;border:1px solid #d4d4d4;border-radius:4px;min-width:0;background:#fff}
.fs legend{padding:0 0 4px;margin-left:1px;line-height:16px;color:#444}
.fs-kind{width:249px;height:71px}
.radios{display:flex;padding:10px 0 0 1.5px;gap:19px}
.rd{display:flex;align-items:center;gap:7px;white-space:nowrap}
.dotr{width:16px;height:16px;border:1px solid #999;border-radius:50%;background:#fff;flex:none}
.dotr-on{background:radial-gradient(circle,#1878e8 4px,#fff 4.5px);border-color:#8ab4e8}
.form{margin-left:8px;flex:1;display:grid;grid-template-columns:108px 1fr;grid-template-rows:31px 30px;row-gap:10px;align-items:center}
.form label{color:#444;white-space:nowrap}
.inp{height:100%;background:#fff;border:1px solid #e4e4e4;border-radius:3px;padding:0 6px 0 4px;display:flex;align-items:center;justify-content:space-between}
.caret-s2{border-left-width:3px;border-right-width:3px;border-top:4px solid #555}
.fs-calc{height:272px;margin-top:10px;padding-bottom:0}
.calc{height:236px;margin-top:3px;border:1px solid #d8d8d8;padding:4px 5px;background:#fff}
.calc p{margin:0;height:21.3px;line-height:21.3px;white-space:nowrap;color:#333;font-size:15px;letter-spacing:.9px}
.calc b{font-weight:700;letter-spacing:0}
.fs-hand{height:136px;margin-top:10px}
.hand{height:62px;margin-top:2px;border:1px solid #d8d8d8}
.hand-row{display:flex;align-items:center;height:32px;margin-top:8px}
.btn{height:31px;line-height:27px;border:1px solid #d8d8d8;border-radius:4px;background:#fff;text-align:center;width:174px;flex:none;color:#444;box-shadow:0 1px 1px rgba(0,0,0,.06)}
.btn-re{width:125px}
.hand-l{margin-left:32px;width:108px;white-space:nowrap;line-height:18px}
.hand-in{flex:1;height:31px;border:1px solid #d8d8d8;border-radius:3px}
.dlg-btns{display:flex;gap:8.500px;margin-top:9px}
.grip{position:absolute;right:2px;bottom:2px;width:12px;height:12px;background:radial-gradient(circle,#888 1px,transparent 1.300px) 0 0/4px 4px;clip-path:polygon(100% 0,100% 100%,0 100%)}

.status{height:39px;flex:none;background:#fdfdfd;display:flex;align-items:center;border-top:1px solid #cfcfcf}
.st{white-space:nowrap;flex:none;color:#555;line-height:18px}
.st1{width:331px;padding-left:3px;font-size:15.5px;letter-spacing:.5px;word-spacing:2px}
.st2{width:104px}
.st3{width:168px}
.st4{width:128px}
.st5{width:127px}
.stools{display:flex;gap:5px;flex:none}
.sb{height:31px;border:1px solid #c8c8c8;border-radius:4px;background:#fff;display:flex;align-items:center;padding-left:4px}
.sb-s{width:30px}
.sb-m{width:44px}
.sb-x{width:31px;margin:0 2px}
.sb-on{background:#dce9fb;border-color:#6aa6ef}
.sb .caret{margin-left:5px;border-top-color:#555}

.taskbar{height:50px;flex:none;display:flex;background:linear-gradient(90deg,#d6dadc,#d8e0e4 60%,#dfe3e6 75%,#e2e0d8);align-items:stretch}
.start{width:61px;display:flex;align-items:center;justify-content:center;flex:none}
.win{width:20px;height:20px;fill:#000}
.tsearch{width:428px;background:#fff;display:flex;align-items:center;flex:none;padding-left:14px;font-size:19px;color:#222;border-bottom:1px solid #ccc}
.tmag{width:22px;height:22px;fill:none;stroke:#222;stroke-width:1.500;margin-right:14px}
.apps{display:flex;flex:none;padding-left:0}
.ap{width:62px;display:flex;align-items:center;justify-content:center;position:relative;flex:none}
.ic{width:24px;height:24px;fill:none}
.ic-l{width:30px;height:30px}
.t-k{stroke:#111;stroke-width:1.800;fill:none}
.ap-u::after{content:"";position:absolute;left:5px;right:5px;bottom:0;height:3px;background:#0e7ad6}
.ap-on{background:#f0f0f0}
.ap-on::after{left:0;right:0}
.e1{fill:#2ebd9c}.e2{fill:#0f6fc6}
.m-lk{fill:none;stroke:#2aa8e8;stroke-width:2.500}
.s1{fill:#0f4c8c}.wr{fill:#f25022}.wg{fill:#7fba00}.wb{fill:#00a4ef}.wy{fill:#ffb900}
.m1{fill:#0f72c6}.m2{fill:#33b5f0}.m3{fill:#fff}
.d1{fill:#fff;stroke:#000;stroke-width:2}.d2{font:bold 9px "Liberation Sans",sans-serif;fill:#000}
.o1{fill:#d83b01}
.f1{fill:#e3a512}.f2{fill:#fcd25e}.f3{fill:#1e7fc8}
.p1{fill:#5bb6ee;stroke:#777}.p2{fill:#cfd4d8;stroke:#999}
.b1{fill:#0a78f0}.b2{fill:none;stroke:#fff;stroke-width:2}
.c1{fill:#666}.c2{fill:#12549c}.c3{font:bold 11px "Liberation Sans",sans-serif;fill:#dfeeff}
.g1{fill:#c8ecff}.g2{fill:#14a4f2}
.tray{margin-left:auto;display:flex;align-items:center;flex:none;position:relative;padding-right:28px}
.tc{width:27px;height:22px;margin-right:7px}
.cl{fill:#a6d6f6;stroke:#7fbfe8}
.tt{white-space:nowrap;color:#222}
.t-temp{font-size:19px;width:49px}
.t-w{font-size:18px;width:44px;padding-left:4px}
.tr-i{width:20px;height:20px;fill:none;stroke:#222;stroke-width:1.200;margin-right:10px;flex:none}
.or{fill:#ff9800;stroke:none}
.t-ime{font-size:17px;width:30px;margin-left:-2px}
.clock{display:flex;flex-direction:column;align-items:center;width:70px;line-height:24px;font-size:15.500px;margin:0 27px 0 2px;color:#222}
.notif{width:24px;height:30px;position:relative}
.n-ic{width:17px;height:17px;background:repeating-linear-gradient(#111 0 3px,#fff 3px 4px,#111 4px 5px);position:absolute;left:2px;top:3px}
.n-b{position:absolute;left:10px;top:12px;width:17px;height:17px;border-radius:50%;background:#ddd;border:1px solid #777;font-size:13px;line-height:15px;text-align:center;color:#000}
```
